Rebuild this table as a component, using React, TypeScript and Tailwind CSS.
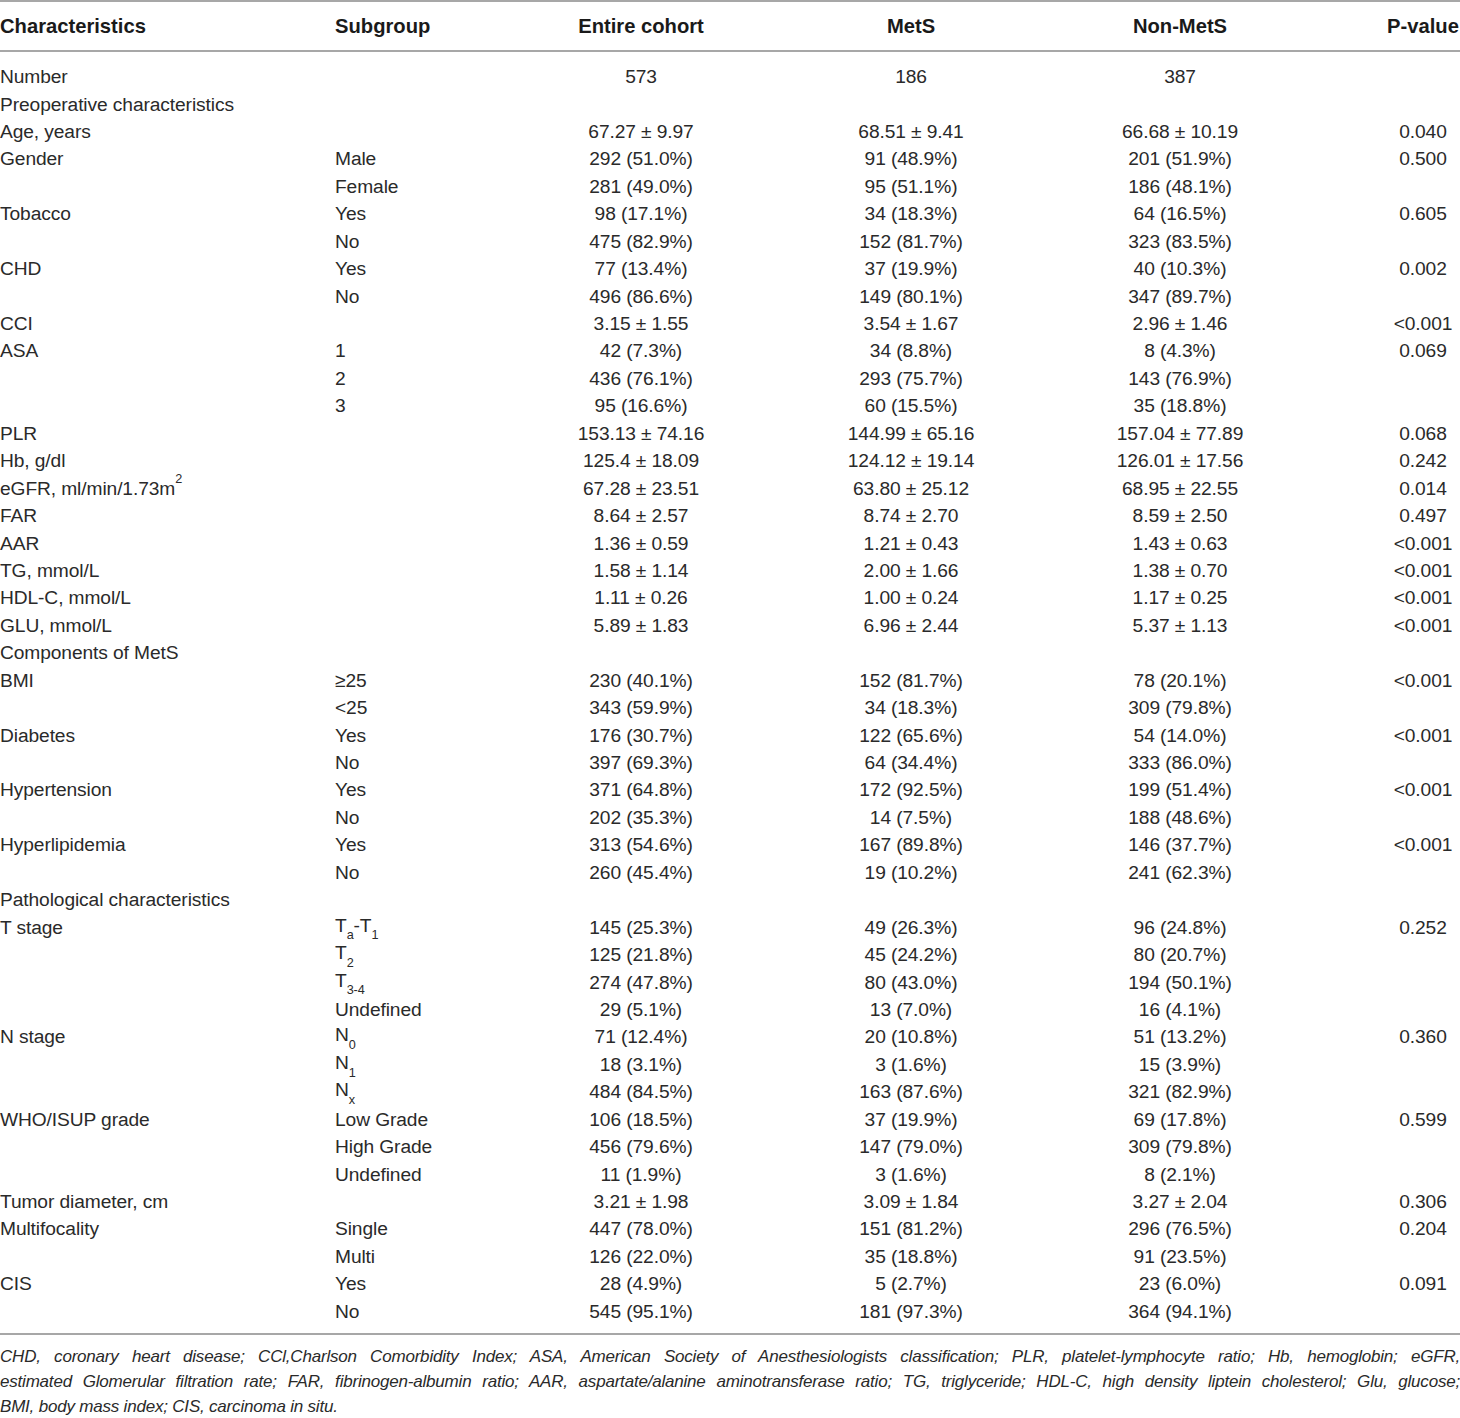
import React from "react";

type Row = [React.ReactNode, React.ReactNode, string, string, string, string];

const sub = (base: string, s: string) => (
  <span>
    {base}
    <sub className="text-[0.66em] align-[-0.35em] leading-none">{s}</sub>
  </span>
);

const rows: Row[] = [
  ["Number", "", "573", "186", "387", ""],
  ["Preoperative characteristics", "", "", "", "", ""],
  ["Age, years", "", "67.27 ± 9.97", "68.51 ± 9.41", "66.68 ± 10.19", "0.040"],
  ["Gender", "Male", "292 (51.0%)", "91 (48.9%)", "201 (51.9%)", "0.500"],
  ["", "Female", "281 (49.0%)", "95 (51.1%)", "186 (48.1%)", ""],
  ["Tobacco", "Yes", "98 (17.1%)", "34 (18.3%)", "64 (16.5%)", "0.605"],
  ["", "No", "475 (82.9%)", "152 (81.7%)", "323 (83.5%)", ""],
  ["CHD", "Yes", "77 (13.4%)", "37 (19.9%)", "40 (10.3%)", "0.002"],
  ["", "No", "496 (86.6%)", "149 (80.1%)", "347 (89.7%)", ""],
  ["CCI", "", "3.15 ± 1.55", "3.54 ± 1.67", "2.96 ± 1.46", "<0.001"],
  ["ASA", "1", "42 (7.3%)", "34 (8.8%)", "8 (4.3%)", "0.069"],
  ["", "2", "436 (76.1%)", "293 (75.7%)", "143 (76.9%)", ""],
  ["", "3", "95 (16.6%)", "60 (15.5%)", "35 (18.8%)", ""],
  ["PLR", "", "153.13 ± 74.16", "144.99 ± 65.16", "157.04 ± 77.89", "0.068"],
  ["Hb, g/dl", "", "125.4 ± 18.09", "124.12 ± 19.14", "126.01 ± 17.56", "0.242"],
  [
    <span>
      eGFR, ml/min/1.73m<sup className="text-[0.66em] align-[0.42em] leading-none">2</sup>
    </span>,
    "",
    "67.28 ± 23.51",
    "63.80 ± 25.12",
    "68.95 ± 22.55",
    "0.014",
  ],
  ["FAR", "", "8.64 ± 2.57", "8.74 ± 2.70", "8.59 ± 2.50", "0.497"],
  ["AAR", "", "1.36 ± 0.59", "1.21 ± 0.43", "1.43 ± 0.63", "<0.001"],
  ["TG, mmol/L", "", "1.58 ± 1.14", "2.00 ± 1.66", "1.38 ± 0.70", "<0.001"],
  ["HDL-C, mmol/L", "", "1.11 ± 0.26", "1.00 ± 0.24", "1.17 ± 0.25", "<0.001"],
  ["GLU, mmol/L", "", "5.89 ± 1.83", "6.96 ± 2.44", "5.37 ± 1.13", "<0.001"],
  ["Components of MetS", "", "", "", "", ""],
  ["BMI", "≥25", "230 (40.1%)", "152 (81.7%)", "78 (20.1%)", "<0.001"],
  ["", "<25", "343 (59.9%)", "34 (18.3%)", "309 (79.8%)", ""],
  ["Diabetes", "Yes", "176 (30.7%)", "122 (65.6%)", "54 (14.0%)", "<0.001"],
  ["", "No", "397 (69.3%)", "64 (34.4%)", "333 (86.0%)", ""],
  ["Hypertension", "Yes", "371 (64.8%)", "172 (92.5%)", "199 (51.4%)", "<0.001"],
  ["", "No", "202 (35.3%)", "14 (7.5%)", "188 (48.6%)", ""],
  ["Hyperlipidemia", "Yes", "313 (54.6%)", "167 (89.8%)", "146 (37.7%)", "<0.001"],
  ["", "No", "260 (45.4%)", "19 (10.2%)", "241 (62.3%)", ""],
  ["Pathological characteristics", "", "", "", "", ""],
  [
    "T stage",
    <span>
      T<sub className="text-[0.66em] align-[-0.35em] leading-none">a</sub>-T
      <sub className="text-[0.66em] align-[-0.35em] leading-none">1</sub>
    </span>,
    "145 (25.3%)",
    "49 (26.3%)",
    "96 (24.8%)",
    "0.252",
  ],
  ["", sub("T", "2"), "125 (21.8%)", "45 (24.2%)", "80 (20.7%)", ""],
  ["", sub("T", "3-4"), "274 (47.8%)", "80 (43.0%)", "194 (50.1%)", ""],
  ["", "Undefined", "29 (5.1%)", "13 (7.0%)", "16 (4.1%)", ""],
  ["N stage", sub("N", "0"), "71 (12.4%)", "20 (10.8%)", "51 (13.2%)", "0.360"],
  ["", sub("N", "1"), "18 (3.1%)", "3 (1.6%)", "15 (3.9%)", ""],
  ["", sub("N", "x"), "484 (84.5%)", "163 (87.6%)", "321 (82.9%)", ""],
  ["WHO/ISUP grade", "Low Grade", "106 (18.5%)", "37 (19.9%)", "69 (17.8%)", "0.599"],
  ["", "High Grade", "456 (79.6%)", "147 (79.0%)", "309 (79.8%)", ""],
  ["", "Undefined", "11 (1.9%)", "3 (1.6%)", "8 (2.1%)", ""],
  ["Tumor diameter, cm", "", "3.21 ± 1.98", "3.09 ± 1.84", "3.27 ± 2.04", "0.306"],
  ["Multifocality", "Single", "447 (78.0%)", "151 (81.2%)", "296 (76.5%)", "0.204"],
  ["", "Multi", "126 (22.0%)", "35 (18.8%)", "91 (23.5%)", ""],
  ["CIS", "Yes", "28 (4.9%)", "5 (2.7%)", "23 (6.0%)", "0.091"],
  ["", "No", "545 (95.1%)", "181 (97.3%)", "364 (94.1%)", ""],
];

const grid =
  "grid grid-cols-[335px_171px_270px_270px_268px_72px_74px] items-center";

export default function App() {
  return (
    <div
      className="w-[1460px] bg-white text-[#231f20]"
      style={{ fontFamily: '"Liberation Sans", Arial, sans-serif' }}
    >
      <div className="h-[2px] bg-[#a7a7a7]" />
      <div className={`${grid} h-[48px] text-[20.2px] font-bold text-[#1a1a1a]`}>
        <div>Characteristics</div>
        <div>Subgroup</div>
        <div className="text-center">Entire cohort</div>
        <div className="text-center">MetS</div>
        <div className="text-center">Non-MetS</div>
        <div />
        <div className="text-center">P-value</div>
      </div>
      <div className="h-[2px] bg-[#a7a7a7]" />
      <div className="pt-[11px] pb-[8px] text-[19.2px] text-[#2a2a2a] tracking-[-0.1px]">
        {rows.map((r, i) => (
          <div key={i} className={`${grid} h-[27.44px] leading-none whitespace-nowrap`}>
            <div>{r[0]}</div>
            <div>{r[1]}</div>
            <div className="text-center">{r[2]}</div>
            <div className="text-center">{r[3]}</div>
            <div className="text-center">{r[4]}</div>
            <div />
            <div className="text-center">{r[5]}</div>
          </div>
        ))}
      </div>
      <div className="h-[2px] bg-[#a7a7a7]" />
      <div className="pt-[9px] text-[17px] italic leading-[25px] text-[#2a2a2a] tracking-[-0.2px]">
        <div className="text-justify [text-align-last:justify]">
          CHD, coronary heart disease; CCl,Charlson Comorbidity Index; ASA, American Society of
          Anesthesiologists classification; PLR, platelet-lymphocyte ratio; Hb, hemoglobin; eGFR,
        </div>
        <div className="text-justify [text-align-last:justify]">
          estimated Glomerular filtration rate; FAR, fibrinogen-albumin ratio; AAR, aspartate/alanine
          aminotransferase ratio; TG, triglyceride; HDL-C, high density liptein cholesterol; Glu,
          glucose;
        </div>
        <div>BMI, body mass index; CIS, carcinoma in situ.</div>
      </div>
    </div>
  );
}
